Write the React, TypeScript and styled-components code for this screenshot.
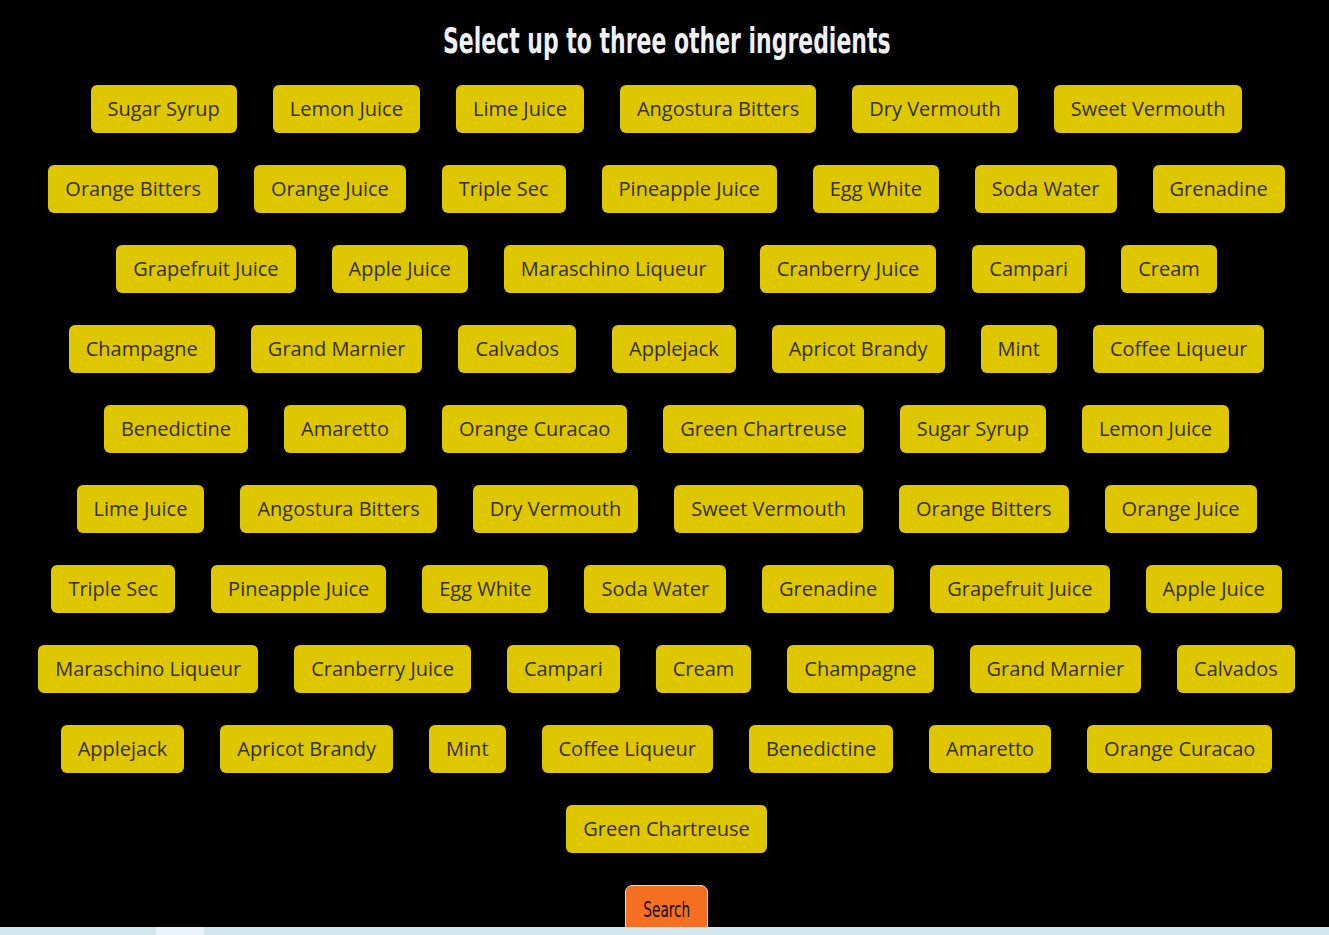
import React from 'react';
import styled, { createGlobalStyle } from 'styled-components';

const rows: string[][] = [
  ['Sugar Syrup', 'Lemon Juice', 'Lime Juice', 'Angostura Bitters', 'Dry Vermouth', 'Sweet Vermouth'],
  ['Orange Bitters', 'Orange Juice', 'Triple Sec', 'Pineapple Juice', 'Egg White', 'Soda Water', 'Grenadine'],
  ['Grapefruit Juice', 'Apple Juice', 'Maraschino Liqueur', 'Cranberry Juice', 'Campari', 'Cream'],
  ['Champagne', 'Grand Marnier', 'Calvados', 'Applejack', 'Apricot Brandy', 'Mint', 'Coffee Liqueur'],
  ['Benedictine', 'Amaretto', 'Orange Curacao', 'Green Chartreuse', 'Sugar Syrup', 'Lemon Juice'],
  ['Lime Juice', 'Angostura Bitters', 'Dry Vermouth', 'Sweet Vermouth', 'Orange Bitters', 'Orange Juice'],
  ['Triple Sec', 'Pineapple Juice', 'Egg White', 'Soda Water', 'Grenadine', 'Grapefruit Juice', 'Apple Juice'],
  ['Maraschino Liqueur', 'Cranberry Juice', 'Campari', 'Cream', 'Champagne', 'Grand Marnier', 'Calvados'],
  ['Applejack', 'Apricot Brandy', 'Mint', 'Coffee Liqueur', 'Benedictine', 'Amaretto', 'Orange Curacao'],
  ['Green Chartreuse'],
];

const GlobalStyle = createGlobalStyle`
  html, body {
    margin: 0;
    padding: 0;
    background: #000;
  }
  body {
    font-family: 'Open Sans', 'Liberation Sans', sans-serif;
    overflow: hidden;
  }
`;

const App = () => {
  return (
    <Page>
      <GlobalStyle />
      <Title>
        <Narrow $scale={0.61}>Select up to three other ingredients</Narrow>
      </Title>
      <Grid>
        {rows.map((row, i) => (
          <Row key={i}>
            {row.map((name, j) => (
              <Chip key={j} type="button">
                {name}
              </Chip>
            ))}
          </Row>
        ))}
      </Grid>
      <SearchButton type="button">
        <Narrow $scale={0.62}>Search</Narrow>
      </SearchButton>
      <BottomStrip>
        <StripThumb />
      </BottomStrip>
    </Page>
  );
};

// styles
const Page = styled.div`
  min-height: 935px;
  padding-left: 4px;
  display: flex;
  flex-direction: column;
  align-items: center;
  background: #000;
`;

// no condensed display face installed, so squeeze a wide one
const Narrow = styled.span<{ $scale: number }>`
  display: inline-block;
  white-space: nowrap;
  transform: scaleX(${({ $scale }) => $scale});
  transform-origin: center;
`;

const Title = styled.h2`
  margin: 21px 0 24px;
  height: 40px;
  display: flex;
  justify-content: center;
  font-family: 'DejaVu Sans', sans-serif;
  font-weight: 700;
  font-size: 36px;
  line-height: 40px;
  color: #eef0f6;
`;

const Grid = styled.div`
  display: flex;
  flex-direction: column;
  gap: 32px;
  width: 100%;
`;

const Row = styled.div`
  display: flex;
  justify-content: center;
  gap: 36px;
`;

const Chip = styled.button`
  height: 48px;
  padding: 0 17px 2px;
  border: none;
  border-radius: 6px;
  background: #dfc700;
  color: #35300e;
  font-family: 'Open Sans', 'Liberation Sans', sans-serif;
  font-size: 20px;
  white-space: nowrap;
  cursor: pointer;
`;

const SearchButton = styled.button`
  margin-top: 32px;
  width: 83px;
  height: 48px;
  padding: 0;
  display: flex;
  align-items: center;
  justify-content: center;
  border: 1px solid #d8d8d8;
  border-radius: 7px;
  background: #f47020;
  color: #111;
  font-family: 'DejaVu Sans', sans-serif;
  font-size: 22px;
  cursor: pointer;
`;

const BottomStrip = styled.div`
  position: fixed;
  left: 0;
  right: 0;
  bottom: 0;
  height: 8px;
  background: #d3e7ee;
`;

const StripThumb = styled.div`
  margin-left: 156px;
  width: 48px;
  height: 100%;
  background: #e8f4f9;
`;

export default App;
